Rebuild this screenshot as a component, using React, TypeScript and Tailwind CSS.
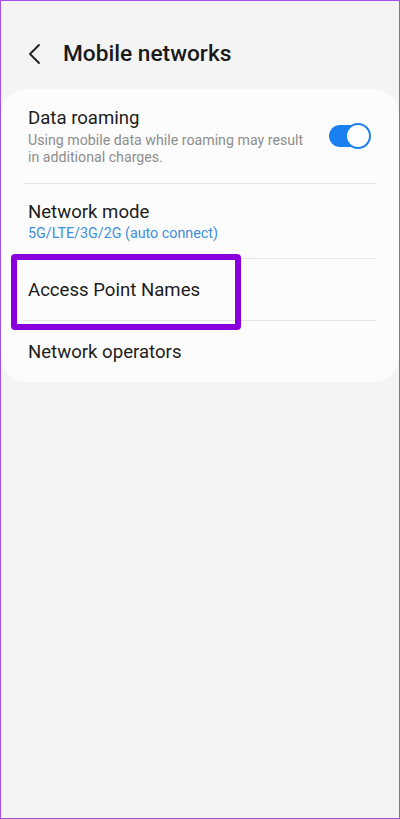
import React from "react";

export default function App() {
  return (
    <div
      className="relative w-[400px] h-[819px] border border-[#a352e8] bg-[#f4f4f4] overflow-hidden"
      style={{ fontFamily: "Roboto, 'Noto Sans', sans-serif" }}
    >
      {/* Header */}
      <div className="flex items-center h-[88px] pt-[18px]">
        <svg className="ml-[26px]" width="16" height="22" viewBox="0 0 16 22">
          <polyline points="12,2 3,11 12,20" fill="none" stroke="#1e1e1e" strokeWidth="1.8" strokeLinecap="round" strokeLinejoin="round" />
        </svg>
        <span className="ml-[20px] text-[22.7px] font-medium text-[#1a1a1a]">Mobile networks</span>
      </div>

      {/* Card */}
      <div className="relative bg-[#fcfcfc] rounded-[26px] mx-0 flex flex-col">
        <div className="flex items-center justify-between pl-[27px] pr-[28px] pt-[17px] pb-[17px]">
          <div className="flex flex-col">
            <span className="text-[18.6px] leading-[24px] text-[#1c1c1c]">Data roaming</span>
            <span className="text-[14.2px] leading-[17px] text-[#8e8e8e] mt-[2px]">
              Using mobile data while roaming may result<br />in additional charges.
            </span>
          </div>
          <div className="relative w-[42px] h-[26px] flex items-center">
            <div className="absolute left-0 w-[36px] h-[22px] rounded-full bg-[#1a7ff0]" />
            <div className="absolute right-0 w-[26px] h-[26px] rounded-full bg-white border-[2px] border-[#1a7ff0]" />
          </div>
        </div>
        <div className="mx-[22px] h-px bg-[#e6e6e6]" />
        <div className="flex flex-col pl-[27px] pt-[16px] pb-[16px]">
          <span className="text-[18.6px] leading-[24px] text-[#1c1c1c]">Network mode</span>
          <span className="text-[14.3px] leading-[18px] text-[#3d8fe0]">5G/LTE/3G/2G (auto connect)</span>
        </div>
        <div className="mx-[22px] h-px bg-[#e6e6e6]" />
        <div className="flex flex-col pl-[27px] pt-[19px] pb-[18px]">
          <span className="text-[18.6px] leading-[24px] text-[#1c1c1c]">Access Point Names</span>
        </div>
        <div className="mx-[22px] h-px bg-[#e6e6e6]" />
        <div className="flex flex-col pl-[27px] pt-[19px] pb-[18px]">
          <span className="text-[18.6px] leading-[24px] text-[#1c1c1c]">Network operators</span>
        </div>

        {/* Highlight box */}
        <div className="absolute left-[10px] top-[165px] w-[230px] h-[76px] border-[6px] border-[#8a00dc] rounded-[4px]" />
      </div>
    </div>
  );
}
